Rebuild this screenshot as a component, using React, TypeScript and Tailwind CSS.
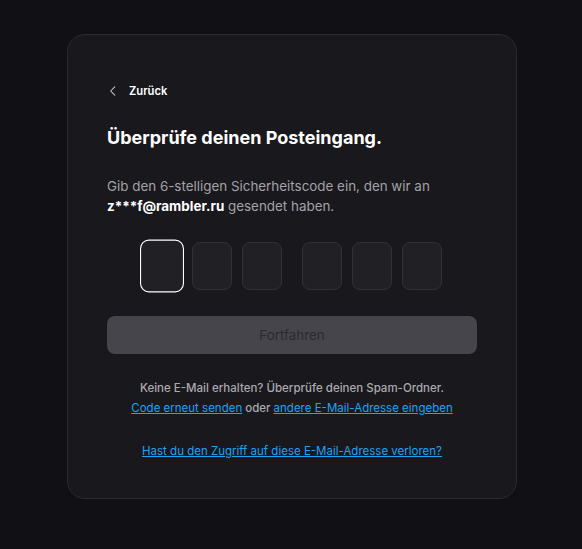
import React from "react";

export default function App() {
  const boxes = [0, 1, 2, 3, 4, 5];
  return (
    <div className="min-h-[549px] w-full bg-[#111015] pt-[34px] pl-[67px] flex" style={{ fontFamily: "Inter, 'Noto Sans', sans-serif" }}>
      <div className="w-[450px] h-[465px] rounded-[18px] border border-[#2b2a30] bg-[#19181d] px-[39px] pt-[46px]">
        <button className="flex items-center gap-[9px] text-white text-[11.2px] font-semibold h-5">
          <svg width="14" height="14" viewBox="0 0 24 24" fill="none" stroke="#c9c8cc" strokeWidth="1.8" strokeLinecap="round" strokeLinejoin="round" className="-ml-[1px]">
            <path d="M15 5l-7 7 7 7" />
          </svg>
          <span>Zurück</span>
        </button>
        <h1 className="mt-[24px] text-[18px] leading-[26px] font-bold text-white">Überprüfe deinen Posteingang.</h1>
        <p className="mt-[25px] text-[13.4px] leading-[20px] text-[#a3a2a8]">
          Gib den 6-stelligen Sicherheitscode ein, den wir an <span className="font-bold text-white">z***f@rambler.ru</span> gesendet haben.
        </p>
        <div className="mt-[26px] flex justify-center gap-[10px]">
          {boxes.map((i) => (
            <div
              key={i}
              className={
                "w-[40px] h-[48px] rounded-[8px] bg-[#212025] " +
                (i === 0 ? "border border-white scale-[1.1] " : "border border-[#323136] ") +
                (i === 3 ? "ml-[10px]" : "")
              }
            />
          ))}
        </div>
        <button className="mt-[26px] w-full h-[38px] rounded-[8px] bg-[#46454b] text-[#2b2a30] text-[13.4px]">Fortfahren</button>
        <div className="mt-[24px] text-center text-[11.5px] leading-[20px] font-medium text-[#abaaaf]">
          <p>Keine E-Mail erhalten? Überprüfe deinen Spam-Ordner.</p>
          <p>
            <a className="text-[#1ea4f5] underline font-normal">Code erneut senden</a> oder{" "}
            <a className="text-[#1ea4f5] underline font-normal">andere E-Mail-Adresse eingeben</a>
          </p>
          <p className="mt-[23px]">
            <a className="text-[#1ea4f5] underline font-normal">Hast du den Zugriff auf diese E-Mail-Adresse verloren?</a>
          </p>
        </div>
      </div>
    </div>
  );
}
